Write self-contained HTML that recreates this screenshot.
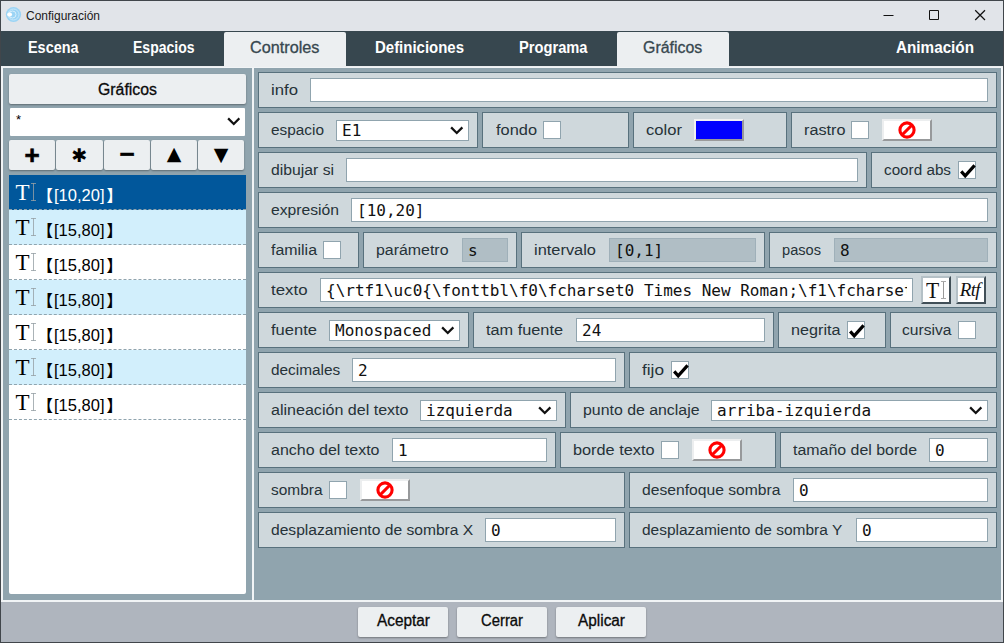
<!DOCTYPE html><html lang="es"><head><meta charset="utf-8"><title>Configuración</title><style>

html,body{margin:0;padding:0;}
body{width:1004px;height:643px;position:relative;overflow:hidden;background:#b0bec5;font-family:'Liberation Sans', 'Noto Sans CJK JP', sans-serif;}
div,span{position:absolute;box-sizing:border-box;}
.t{white-space:nowrap;line-height:20px;transform-origin:0 50%;}
.lbl{font-size:15.5px;color:#263238;}
.mono{font-family:'DejaVu Sans Mono', 'Liberation Mono', monospace;font-size:16px;color:#111;white-space:nowrap;line-height:22px;left:5px;top:0.5px;max-width:calc(100% - 10px);overflow:hidden;}
.cell{background:#cfd8dc;border:1px solid #58717d;}
.inp{background:#fff;border:1px solid #90a4ae;overflow:hidden;}
.inp.dis{background:#b0bec5;border-color:#9fb0b9;}
.sel{background:#fff;border:1px solid #90a4ae;overflow:hidden;}
.sel .mono{line-height:19px;left:5px;top:0px;}
.chev{position:absolute;right:4.2px;top:5.2px;width:13.5px;height:9px;}
.chk{background:#fff;border:1px solid #90a4ae;}
.nobtn{background:#fff;border:2px solid #eceeef;border-right-color:#97999b;border-bottom-color:#97999b;}
.tabbg{background:#eceff1;border-radius:2px 2px 0 0;}
.tab{color:#fff;font-weight:bold;font-size:16px;}
.tab.act{color:#37474f;font-weight:normal;-webkit-text-stroke:0.3px #37474f;}
.btn{background:#eceff1;border-radius:2px;box-shadow:0 1px 2px rgba(0,0,0,.35);}
.btx{font-size:15.6px;color:#0a0a0a;-webkit-text-stroke:0.3px #0a0a0a;}
.li{left:9px;width:237px;height:35px;border-bottom:1px dashed #90a4ae;background:#fff;}
.li.alt{background:#d2effc;}
.li.selx{background:#01579b;color:#fff;}
.li .ic{font-family:'Liberation Serif', serif;font-size:23px;left:6.5px;top:4px;line-height:28px;}
.ib{left:24px;top:8px;width:1px;height:18px;background:rgba(150,160,165,.8);}
.ib2{left:22px;top:8px;width:5px;height:1px;background:rgba(150,160,165,.8);}
.ib3{left:22px;top:25px;width:5px;height:1px;background:rgba(150,160,165,.8);}
.li .tx{top:10.5px;font-size:16px;line-height:20px;white-space:nowrap;font-weight:bold;}
.li .tx2{font-size:16px;line-height:20px;}

</style></head><body>
<div class="" style="left:0px;top:0px;width:1004px;height:643px;background:#41464b;"></div>
<div class="" style="left:1px;top:1px;width:1002px;height:30px;background:#e1e4e9;"></div>
<svg style="position:absolute;left:5px;top:6px" width="17" height="17" viewBox="0 0 17 17"><circle cx="8.5" cy="8.5" r="7.6" fill="#9bd4f5"/><circle cx="8.5" cy="8.5" r="5.5" fill="none" stroke="#c9e8fa" stroke-width="1"/><circle cx="7.5" cy="8.5" r="3.5" fill="none" stroke="#d9effc" stroke-width="1"/><ellipse cx="4.6" cy="8.4" rx="2.5" ry="2" fill="#fff"/></svg>
<span class="t " style="left:26px;top:6px;font-size:12px;color:#1a1a1a;transform:scaleX(0.9994);">Configuración</span>
<svg style="position:absolute;left:870px;top:1px" width="134" height="30" viewBox="0 0 134 30"><path d="M13.5 14.5h10M59.5 9.5h9v9h-9z" fill="none" stroke="#111" stroke-width="1" stroke-linejoin="miter"/><path d="M105.2 9.2l9.8 9.8M115 9.2l-9.8 9.8" fill="none" stroke="#111" stroke-width="1.25"/></svg>
<div class="" style="left:1px;top:31px;width:1002px;height:35px;background:#37474f;"></div>
<div class="tabbg" style="left:224px;top:32px;width:122px;height:34px;"></div>
<div class="tabbg" style="left:617px;top:32px;width:112px;height:34px;"></div>
<span class="t tab" style="left:27.8px;top:38px;transform:scaleX(0.9010);">Escena</span>
<span class="t tab" style="left:133.3px;top:38px;transform:scaleX(0.8753);">Espacios</span>
<span class="t tab act" style="left:249.55px;top:38px;transform:scaleX(1.0148);">Controles</span>
<span class="t tab" style="left:374.55px;top:38px;transform:scaleX(0.9355);">Definiciones</span>
<span class="t tab" style="left:518.8px;top:38px;transform:scaleX(0.9170);">Programa</span>
<span class="t tab act" style="left:642.55px;top:38px;transform:scaleX(0.9945);">Gráficos</span>
<span class="t tab" style="left:896.3px;top:38px;transform:scaleX(0.9536);">Animación</span>
<div class="" style="left:1px;top:66px;width:1002px;height:536px;background:#f1f4f6;"></div>
<div class="" style="left:1px;top:66px;width:1002px;height:1px;background:#eceff1;"></div>
<div class="" style="left:3px;top:68px;width:249px;height:532px;background:#90a4ae;"></div>
<div class="" style="left:254px;top:68px;width:747px;height:532px;background:#90a4ae;"></div>
<div class="" style="left:1px;top:602px;width:1002px;height:40px;background:#afb5be;"></div>
<div class="btn" style="left:358px;top:607px;width:90px;height:30px;"></div>
<span class="t btx" style="left:377px;top:611px;transform:scaleX(0.9860);">Aceptar</span>
<div class="btn" style="left:457px;top:607px;width:90px;height:30px;"></div>
<span class="t btx" style="left:481px;top:611px;transform:scaleX(0.9505);">Cerrar</span>
<div class="btn" style="left:556px;top:607px;width:90px;height:30px;"></div>
<span class="t btx" style="left:578px;top:611px;transform:scaleX(0.9859);">Aplicar</span>
<div class="btn" style="left:9px;top:74px;width:237px;height:30px;"></div>
<span class="t btx" style="left:98px;top:80px;transform:scaleX(1.0161);">Gráficos</span>
<div class="" style="left:10px;top:108px;width:235px;height:28px;background:#fff;border-radius:1px;"><span class="t" style="left:6px;top:2px;font-size:13px;">*</span><svg class="chev" style="right:5px;top:9.3px" viewBox="0 0 12 8"><path d="M1 1.2 L6 6.2 L11 1.2" fill="none" stroke="#111" stroke-width="2"/></svg></div>
<div class="btn" style="left:9px;top:140px;width:46px;height:30px;"></div>
<span class="t" style="left:9px;width:46px;top:139.5px;height:30px;text-align:center;color:#000;font:bold 26px 'Liberation Sans', 'Noto Sans CJK JP', sans-serif;-webkit-text-stroke:0.6px #000;line-height:30px;">+</span>
<div class="btn" style="left:56px;top:140px;width:47px;height:30px;"></div>
<span class="t" style="left:56px;width:47px;top:139.5px;height:30px;text-align:center;color:#000;font:19px 'DejaVu Sans',sans-serif;line-height:30px;">✱</span>
<div class="btn" style="left:104px;top:140px;width:46px;height:30px;"></div>
<span class="t" style="left:104px;width:46px;top:139px;height:30px;text-align:center;color:#000;font:bold 26px 'Liberation Sans', 'Noto Sans CJK JP', sans-serif;-webkit-text-stroke:0.6px #000;line-height:30px;">−</span>
<div class="btn" style="left:151px;top:140px;width:46px;height:30px;"></div>
<span class="t" style="left:151px;width:46px;top:138.2px;height:30px;text-align:center;color:#000;font:19px 'DejaVu Sans',sans-serif;line-height:30px;">▲</span>
<div class="btn" style="left:198px;top:140px;width:46px;height:30px;"></div>
<span class="t" style="left:198px;width:46px;top:139.2px;height:30px;text-align:center;color:#000;font:19px 'DejaVu Sans',sans-serif;line-height:30px;">▼</span>
<div class="" style="left:9px;top:175px;width:237px;height:419px;background:#fff;border-radius:2px;"></div>
<div class="li selx" style="top:175px;"><span class="ic">T</span><span class="ib"></span><span class="ib2"></span><span class="ib3"></span><span class="tx" style="left:28px">【</span><span class="t tx2" style="left:44.8px;top:10.5px;transform:scaleX(1.0319);">[10,20]</span><span class="tx" style="left:97.5px">】</span></div>
<div class="li alt" style="top:210px;"><span class="ic">T</span><span class="ib"></span><span class="ib2"></span><span class="ib3"></span><span class="tx" style="left:28px">【</span><span class="t tx2" style="left:44.8px;top:10.5px;transform:scaleX(1.0319);">[15,80]</span><span class="tx" style="left:97.5px">】</span></div>
<div class="li" style="top:245px;"><span class="ic">T</span><span class="ib"></span><span class="ib2"></span><span class="ib3"></span><span class="tx" style="left:28px">【</span><span class="t tx2" style="left:44.8px;top:10.5px;transform:scaleX(1.0319);">[15,80]</span><span class="tx" style="left:97.5px">】</span></div>
<div class="li alt" style="top:280px;"><span class="ic">T</span><span class="ib"></span><span class="ib2"></span><span class="ib3"></span><span class="tx" style="left:28px">【</span><span class="t tx2" style="left:44.8px;top:10.5px;transform:scaleX(1.0319);">[15,80]</span><span class="tx" style="left:97.5px">】</span></div>
<div class="li" style="top:315px;"><span class="ic">T</span><span class="ib"></span><span class="ib2"></span><span class="ib3"></span><span class="tx" style="left:28px">【</span><span class="t tx2" style="left:44.8px;top:10.5px;transform:scaleX(1.0319);">[15,80]</span><span class="tx" style="left:97.5px">】</span></div>
<div class="li alt" style="top:350px;"><span class="ic">T</span><span class="ib"></span><span class="ib2"></span><span class="ib3"></span><span class="tx" style="left:28px">【</span><span class="t tx2" style="left:44.8px;top:10.5px;transform:scaleX(1.0319);">[15,80]</span><span class="tx" style="left:97.5px">】</span></div>
<div class="li" style="top:385px;"><span class="ic">T</span><span class="ib"></span><span class="ib2"></span><span class="ib3"></span><span class="tx" style="left:28px">【</span><span class="t tx2" style="left:44.8px;top:10.5px;transform:scaleX(1.0319);">[15,80]</span><span class="tx" style="left:97.5px">】</span></div>
<div class="cell" style="left:258px;top:72px;width:739px;height:36px;"></div>
<span class="t lbl" style="left:270.7px;top:79.6px;transform:scaleX(1.0800);">info</span>
<div class="inp" style="left:310px;top:78px;width:678px;height:24px;"></div>
<div class="cell" style="left:258px;top:112px;width:220px;height:36px;"></div>
<span class="t lbl" style="left:270.7px;top:119.6px;transform:scaleX(0.9918);">espacio</span>
<div class="sel" style="left:336px;top:120px;width:133px;height:21px;"><span class="mono">E1</span><svg class="chev" viewBox="0 0 12 8"><path d="M1 1.2 L6 6.2 L11 1.2" fill="none" stroke="#111" stroke-width="2"/></svg></div>
<div class="cell" style="left:482px;top:112px;width:147px;height:36px;"></div>
<span class="t lbl" style="left:495.7px;top:119.6px;transform:scaleX(1.0568);">fondo</span>
<div class="chk" style="left:543px;top:121px;width:18px;height:18px;"></div>
<div class="cell" style="left:633px;top:112px;width:154px;height:36px;"></div>
<span class="t lbl" style="left:645.7px;top:119.6px;transform:scaleX(1.0711);">color</span>
<div class="" style="left:694px;top:119px;width:50px;height:22px;background:#0000ff;border:2px solid #f0f0f0;border-right-color:#9a9a9a;border-bottom-color:#9a9a9a;"></div>
<div class="cell" style="left:791px;top:112px;width:206px;height:36px;"></div>
<span class="t lbl" style="left:803.7px;top:119.6px;transform:scaleX(1.0473);">rastro</span>
<div class="chk" style="left:851px;top:121px;width:18px;height:18px;"></div>
<div class="nobtn" style="left:882px;top:119px;width:50px;height:22px;"><svg viewBox="0 0 18 18" width="18" height="18" style="position:absolute;left:14.2px;top:0px"><circle cx="9" cy="9" r="7.1" fill="none" stroke="#f00" stroke-width="3.1"/><path d="M4 14 L14 4" stroke="#f00" stroke-width="3.1"/></svg></div>
<div class="cell" style="left:258px;top:152px;width:609px;height:36px;"></div>
<span class="t lbl" style="left:270.7px;top:159.6px;transform:scaleX(1.0156);">dibujar si</span>
<div class="inp" style="left:346px;top:158px;width:512px;height:24px;"></div>
<div class="cell" style="left:871px;top:152px;width:126px;height:36px;"></div>
<span class="t lbl" style="left:884.2px;top:159.6px;transform:scaleX(0.9842);">coord abs</span>
<div class="chk" style="left:958px;top:161px;width:18px;height:18px;"><svg viewBox="0 0 18 18" width="18" height="18" style="position:absolute;left:-1px;top:-1px"><path d="M3.2 10.4 L7.2 14.8 L16.6 4.4" fill="none" stroke="#000" stroke-width="3.2"/></svg></div>
<div class="cell" style="left:258px;top:192px;width:739px;height:36px;"></div>
<span class="t lbl" style="left:270.7px;top:199.6px;transform:scaleX(1.0116);">expresión</span>
<div class="inp" style="left:351px;top:198px;width:637px;height:24px;"><span class="mono">[10,20]</span></div>
<div class="cell" style="left:258px;top:232px;width:101px;height:36px;"></div>
<span class="t lbl" style="left:270.7px;top:239.6px;transform:scaleX(1.0269);">familia</span>
<div class="chk" style="left:323px;top:241px;width:18px;height:18px;"></div>
<div class="cell" style="left:363px;top:232px;width:154px;height:36px;"></div>
<span class="t lbl" style="left:376.45px;top:239.6px;transform:scaleX(1.0261);">parámetro</span>
<div class="inp dis" style="left:462px;top:238px;width:46px;height:24px;"><span class="mono">s</span></div>
<div class="cell" style="left:521px;top:232px;width:244px;height:36px;"></div>
<span class="t lbl" style="left:534.2px;top:239.6px;transform:scaleX(1.0581);">intervalo</span>
<div class="inp dis" style="left:609px;top:238px;width:147px;height:24px;"><span class="mono">[0,1]</span></div>
<div class="cell" style="left:769px;top:232px;width:228px;height:36px;"></div>
<span class="t lbl" style="left:782.2px;top:239.6px;transform:scaleX(0.9426);">pasos</span>
<div class="inp dis" style="left:834px;top:238px;width:154px;height:24px;"><span class="mono">8</span></div>
<div class="cell" style="left:258px;top:272px;width:739px;height:36px;"></div>
<span class="t lbl" style="left:270.7px;top:279.6px;transform:scaleX(1.0860);">texto</span>
<div class="inp" style="left:320px;top:278px;width:593px;height:24px;"><span class="mono">{\rtf1\uc0{\fonttbl\f0\fcharset0 Times New Roman;\f1\fcharset0 Arial;}</span></div>
<div class="tbtn" style="left:921px;top:276px;width:30px;height:28px;background:#fff;border:2px solid #b4c0c6;border-right-color:#414f57;border-bottom-color:#414f57;"><span class="t" style="font-family:'Liberation Serif', serif;font-size:23px;left:2.8px;top:2.5px;color:#111;transform:scaleX(0.94)">T</span><span style="left:19.5px;top:2.5px;width:1.3px;height:18px;background:#9a9a9a"></span><span style="left:17.5px;top:2.5px;width:5.3px;height:1px;background:#aaa"></span><span style="left:17.5px;top:19.5px;width:5.3px;height:1px;background:#aaa"></span></div>
<div class="tbtn" style="left:956px;top:276px;width:30px;height:28px;background:#fff;border:2px solid #b4c0c6;border-right-color:#414f57;border-bottom-color:#414f57;"><span class="t" style="font-family:'Liberation Serif', serif;font-style:italic;font-size:19px;left:1.8px;top:2px;color:#111;letter-spacing:-0.7px">Rtf</span></div>
<div class="cell" style="left:258px;top:312px;width:211px;height:36px;"></div>
<span class="t lbl" style="left:270.7px;top:319.6px;transform:scaleX(1.0671);">fuente</span>
<div class="sel" style="left:329px;top:320px;width:131px;height:21px;"><span class="mono">Monospaced</span><svg class="chev" viewBox="0 0 12 8"><path d="M1 1.2 L6 6.2 L11 1.2" fill="none" stroke="#111" stroke-width="2"/></svg></div>
<div class="cell" style="left:473px;top:312px;width:301px;height:36px;"></div>
<span class="t lbl" style="left:485.7px;top:319.6px;transform:scaleX(1.0512);">tam fuente</span>
<div class="inp" style="left:576px;top:318px;width:189px;height:24px;"><span class="mono">24</span></div>
<div class="cell" style="left:778px;top:312px;width:108px;height:36px;"></div>
<span class="t lbl" style="left:790.7px;top:319.6px;transform:scaleX(1.0442);">negrita</span>
<div class="chk" style="left:847px;top:321px;width:18px;height:18px;"><svg viewBox="0 0 18 18" width="18" height="18" style="position:absolute;left:-1px;top:-1px"><path d="M3.2 10.4 L7.2 14.8 L16.6 4.4" fill="none" stroke="#000" stroke-width="3.2"/></svg></div>
<div class="cell" style="left:890px;top:312px;width:107px;height:36px;"></div>
<span class="t lbl" style="left:902.2px;top:319.6px;transform:scaleX(1.0080);">cursiva</span>
<div class="chk" style="left:958px;top:321px;width:18px;height:18px;"></div>
<div class="cell" style="left:258px;top:352px;width:367px;height:36px;"></div>
<span class="t lbl" style="left:270.7px;top:359.6px;transform:scaleX(0.9924);">decimales</span>
<div class="inp" style="left:352px;top:358px;width:264px;height:24px;"><span class="mono">2</span></div>
<div class="cell" style="left:629px;top:352px;width:368px;height:36px;"></div>
<span class="t lbl" style="left:642.2px;top:359.6px;transform:scaleX(1.1095);">fijo</span>
<div class="chk" style="left:671px;top:361px;width:18px;height:18px;"><svg viewBox="0 0 18 18" width="18" height="18" style="position:absolute;left:-1px;top:-1px"><path d="M3.2 10.4 L7.2 14.8 L16.6 4.4" fill="none" stroke="#000" stroke-width="3.2"/></svg></div>
<div class="cell" style="left:258px;top:392px;width:308px;height:36px;"></div>
<span class="t lbl" style="left:270.7px;top:399.6px;transform:scaleX(1.0360);">alineación del texto</span>
<div class="sel" style="left:420px;top:400px;width:137px;height:21px;"><span class="mono">izquierda</span><svg class="chev" viewBox="0 0 12 8"><path d="M1 1.2 L6 6.2 L11 1.2" fill="none" stroke="#111" stroke-width="2"/></svg></div>
<div class="cell" style="left:570px;top:392px;width:427px;height:36px;"></div>
<span class="t lbl" style="left:582.95px;top:399.6px;transform:scaleX(1.0240);">punto de anclaje</span>
<div class="sel" style="left:711px;top:400px;width:277px;height:21px;"><span class="mono">arriba-izquierda</span><svg class="chev" viewBox="0 0 12 8"><path d="M1 1.2 L6 6.2 L11 1.2" fill="none" stroke="#111" stroke-width="2"/></svg></div>
<div class="cell" style="left:258px;top:432px;width:298px;height:36px;"></div>
<span class="t lbl" style="left:270.7px;top:439.6px;transform:scaleX(1.0320);">ancho del texto</span>
<div class="inp" style="left:392px;top:438px;width:155px;height:24px;"><span class="mono">1</span></div>
<div class="cell" style="left:560px;top:432px;width:216px;height:36px;"></div>
<span class="t lbl" style="left:572.95px;top:439.6px;transform:scaleX(1.0508);">borde texto</span>
<div class="chk" style="left:661px;top:441px;width:18px;height:18px;"></div>
<div class="nobtn" style="left:692px;top:439px;width:50px;height:22px;"><svg viewBox="0 0 18 18" width="18" height="18" style="position:absolute;left:14.2px;top:0px"><circle cx="9" cy="9" r="7.1" fill="none" stroke="#f00" stroke-width="3.1"/><path d="M4 14 L14 4" stroke="#f00" stroke-width="3.1"/></svg></div>
<div class="cell" style="left:780px;top:432px;width:217px;height:36px;"></div>
<span class="t lbl" style="left:793.45px;top:439.6px;transform:scaleX(1.0278);">tamaño del borde</span>
<div class="inp" style="left:929px;top:438px;width:59px;height:24px;"><span class="mono">0</span></div>
<div class="cell" style="left:258px;top:472px;width:367px;height:36px;"></div>
<span class="t lbl" style="left:270.7px;top:479.6px;transform:scaleX(0.9964);">sombra</span>
<div class="chk" style="left:329px;top:481px;width:18px;height:18px;"></div>
<div class="nobtn" style="left:360px;top:479px;width:50px;height:22px;"><svg viewBox="0 0 18 18" width="18" height="18" style="position:absolute;left:14.2px;top:0px"><circle cx="9" cy="9" r="7.1" fill="none" stroke="#f00" stroke-width="3.1"/><path d="M4 14 L14 4" stroke="#f00" stroke-width="3.1"/></svg></div>
<div class="cell" style="left:629px;top:472px;width:368px;height:36px;"></div>
<span class="t lbl" style="left:642.2px;top:479.6px;transform:scaleX(1.0108);">desenfoque sombra</span>
<div class="inp" style="left:793px;top:478px;width:195px;height:24px;"><span class="mono">0</span></div>
<div class="cell" style="left:258px;top:512px;width:367px;height:36px;"></div>
<span class="t lbl" style="left:270.7px;top:519.6px;transform:scaleX(1.0074);">desplazamiento de sombra X</span>
<div class="inp" style="left:485px;top:518px;width:131px;height:24px;"><span class="mono">0</span></div>
<div class="cell" style="left:629px;top:512px;width:368px;height:36px;"></div>
<span class="t lbl" style="left:642.2px;top:519.6px;transform:scaleX(0.9988);">desplazamiento de sombra Y</span>
<div class="inp" style="left:856px;top:518px;width:132px;height:24px;"><span class="mono">0</span></div>
</body></html>
